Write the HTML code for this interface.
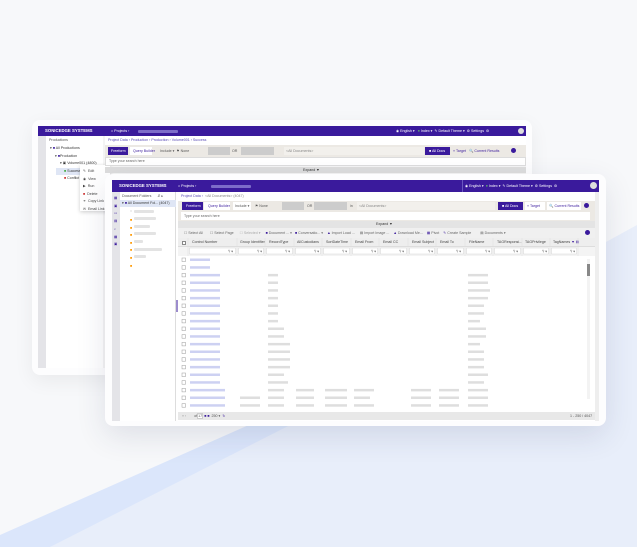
<!DOCTYPE html>
<html><head><meta charset="utf-8"><style>
*{margin:0;padding:0;box-sizing:border-box}
body{width:637px;height:547px;overflow:hidden;background:#f7f8fa;font-family:"Liberation Sans",sans-serif;position:relative}
.a{position:absolute}
.t{position:absolute;font-size:3.6px;white-space:nowrap;color:#555;line-height:1}
.bar{position:absolute;height:3px;border-radius:1px}
.hd{background:#3a1a9c}
.w{color:#fff}
.cb{position:absolute;width:4px;height:4px;border:0.6px solid #888;background:#fff}
</style></head><body>
<svg class="a" style="left:0;top:0" width="637" height="547">
<polygon points="50,547 637,225 637,547" fill="#e8eefa"/>
<polygon points="0,535 260,420 300,420 50,547 0,547" fill="#dbe6fb"/>
</svg>

<!-- back card -->
<div class="a" style="left:32px;top:120px;width:500px;height:255px;background:#fdfdfe;border-radius:8px;box-shadow:0 6px 20px rgba(0,0,0,.06)"></div>
<div class="a" style="left:38px;top:126px;width:488px;height:242px;background:#f4f4f4"></div>
<div class="a hd" style="left:38px;top:126px;width:488px;height:10px"></div>
<div class="t w" style="left:45px;top:129px;font-size:4.3px;font-weight:bold">SONICEDGE SYSTEMS</div>
<div class="t w" style="left:111px;top:129.5px">⌂ Projects ›</div>
<div class="bar" style="left:138px;top:130px;width:40px;background:#7d6cc9"></div>
<div class="t w" style="left:396px;top:129.5px">◉ English ▾ &nbsp;&nbsp;<span style="color:#6c6">●</span> Index ▾ &nbsp;✎ Default Theme ▾ &nbsp;⚙ Settings &nbsp;⚙</div>
<div class="a" style="left:518px;top:128px;width:6px;height:6px;border-radius:50%;background:#ddd"></div>
<div class="a" style="left:38px;top:136px;width:8px;height:232px;background:#e4e4e8"></div>
<div class="a" style="left:46px;top:136px;width:57px;height:232px;background:#fff"></div>
<div class="t" style="left:49px;top:139px">Productions</div>
<div class="t" style="left:50px;top:147px;color:#333">▾ <span style="color:#3a1a9c">■</span> All Productions</div>
<div class="t" style="left:55px;top:155px;color:#333">▾ <span style="color:#3a1a9c">■</span>Production</div>
<div class="t" style="left:60px;top:162px;color:#333">▾ ▣ Volume001 (4800)</div>
<div class="a" style="left:56px;top:168px;width:47px;height:7px;background:#dfe6f5"></div>
<div class="t" style="left:64px;top:170px;color:#333"><span style="color:#4a4">■</span> Success (4</div>
<div class="t" style="left:64px;top:177px;color:#333"><span style="color:#c33">■</span> Conflict (0)</div>
<div class="a" style="left:80px;top:165px;width:30px;height:46px;background:#fff;box-shadow:0 1px 4px rgba(0,0,0,.2)"></div>
<div class="t" style="left:83px;top:168px;line-height:7.6px;color:#444;white-space:pre">✎  Edit
◉  View
▶  Run
<span style="color:#c33">■</span>  Delete
⚭  Copy Link
✉  Email Link</div>
<div class="a" style="left:105px;top:136px;width:421px;height:9px;background:#fff"></div>
<div class="t" style="left:108px;top:139px;color:#5a4bb5">Project Data › Production › Production › Volume001 › Success</div>
<div class="a" style="left:105px;top:145px;width:421px;height:12px;background:#ece9e4"></div>
<div class="a hd" style="left:108px;top:147px;width:20px;height:8px"></div>
<div class="t w" style="left:111px;top:149.5px">Freeform</div>
<div class="a" style="left:130px;top:147px;width:22px;height:8px;background:#fff"></div>
<div class="t" style="left:133px;top:149.5px;color:#3a1a9c">Query Builder</div>
<div class="t" style="left:160px;top:149.5px">Include ▾ &nbsp;⚑ None</div>
<div class="a" style="left:208px;top:147px;width:22px;height:8px;background:#ccc"></div>
<div class="a" style="left:241px;top:147px;width:33px;height:8px;background:#ccc"></div>
<div class="t" style="left:232px;top:149.5px">OR</div>
<div class="a" style="left:284px;top:147px;width:140px;height:8px;background:#f2f0ec"></div>
<div class="t" style="left:286px;top:149.5px;color:#888">&lt;All Documents&gt;</div>
<div class="a hd" style="left:425px;top:147px;width:25px;height:8px"></div>
<div class="t w" style="left:429px;top:149.5px">■ All Docs</div>
<div class="t" style="left:453px;top:149.5px;color:#3a1a9c">⌖ Target &nbsp;&nbsp;🔍 Current Results</div>
<div class="a" style="left:511px;top:148px;width:5px;height:5px;border-radius:50%;background:#3a1a9c"></div>
<div class="a" style="left:105px;top:157px;width:421px;height:9px;background:#fff;border:0.5px solid #ddd"></div>
<div class="t" style="left:109px;top:160px;color:#666">Type your search here</div>
<div class="a" style="left:105px;top:167px;width:421px;height:6px;background:#ddd"></div>
<div class="t" style="left:303px;top:168.5px;color:#333">Expand ▼</div>

<!-- front card -->
<div class="a" style="left:105px;top:174px;width:501px;height:252px;background:#fdfdfe;border-radius:8px;box-shadow:0 10px 30px rgba(40,50,90,.12)"></div>
<div class="a" style="left:112px;top:180px;width:487px;height:241px;background:#fff"></div>
<div class="a hd" style="left:112px;top:180px;width:487px;height:12px"></div>
<div class="t w" style="left:119px;top:184px;font-size:4.3px;font-weight:bold">SONICEDGE SYSTEMS</div>
<div class="t w" style="left:178px;top:184.5px">⌂ Projects ›</div>
<div class="bar" style="left:211px;top:185px;width:40px;background:#7d6cc9"></div>
<div class="a" style="left:462px;top:180px;width:1px;height:12px;background:#6a56c0"></div>
<div class="t w" style="left:465px;top:184.5px">◉ English ▾ &nbsp;<span style="color:#6c6">●</span> Index ▾ &nbsp;✎ Default Theme ▾ &nbsp;⚙ Settings &nbsp;⚙</div>
<div class="a" style="left:590px;top:182px;width:7px;height:7px;border-radius:50%;background:#ddd"></div>
<div class="a" style="left:112px;top:192px;width:8px;height:229px;background:#e4e4e8"></div>
<div class="t" style="left:114px;top:195px;line-height:7.7px;color:#3a1a9c;white-space:pre">▦
▣
▭
▤
⌕
▦
▣</div>
<div class="a" style="left:120px;top:192px;width:56px;height:229px;background:#fff;border-right:1px solid #ddd"></div>
<div class="t" style="left:122px;top:195px">Document Folders &nbsp;&nbsp;&nbsp;&nbsp;&nbsp;⇵ ▸</div>
<div class="a" style="left:120px;top:200px;width:56px;height:7px;background:#dfe6f5"></div>
<div class="t" style="left:122px;top:202px;color:#333">▾ <span style="color:#3a1a9c">■</span> All Document Fol... (4047)</div>
<div class="t" style="left:130px;top:209.5px;color:#aaa">○</div>
<div class="bar" style="left:134px;top:210px;width:20px;background:#e3e3e3"></div>
<div class="t" style="left:130px;top:217px;color:#f90;line-height:7.6px;white-space:pre">■
■
■
■
■
■
■</div>
<div class="bar" style="left:134px;top:217px;width:22px;background:#e3e3e3"></div>
<div class="bar" style="left:134px;top:225px;width:16px;background:#e3e3e3"></div>
<div class="bar" style="left:134px;top:232px;width:22px;background:#e3e3e3"></div>
<div class="bar" style="left:134px;top:240px;width:9px;background:#e3e3e3"></div>
<div class="bar" style="left:134px;top:248px;width:28px;background:#e3e3e3"></div>
<div class="bar" style="left:134px;top:255px;width:12px;background:#e3e3e3"></div>
<div class="a" style="left:176px;top:300px;width:2px;height:12px;background:#3a1a9c;opacity:.5"></div>

<div class="t" style="left:181px;top:195px;color:#5a4bb5">Project Data › &nbsp;<span style="color:#888">&lt;All Documents&gt; (4047)</span></div>
<div class="a" style="left:178px;top:201px;width:417px;height:10px;background:#ece9e4"></div>
<div class="a hd" style="left:182px;top:202px;width:21px;height:8px"></div>
<div class="t w" style="left:186px;top:204.5px">Freeform</div>
<div class="a" style="left:204px;top:202px;width:26px;height:8px;background:#fff"></div>
<div class="t" style="left:208px;top:204.5px;color:#3a1a9c">Query Builder</div>
<div class="a" style="left:233px;top:202px;width:18px;height:8px;background:#fff"></div>
<div class="t" style="left:235px;top:204.5px">Include ▾</div>
<div class="t" style="left:255px;top:204.5px">⚑ None</div>
<div class="a" style="left:282px;top:202px;width:22px;height:8px;background:#ccc"></div>
<div class="t" style="left:307px;top:204.5px">OR</div>
<div class="a" style="left:314px;top:202px;width:33px;height:8px;background:#ccc"></div>
<div class="t" style="left:350px;top:204.5px">in</div>
<div class="a" style="left:357px;top:202px;width:138px;height:8px;background:#f2f0ec"></div>
<div class="t" style="left:359px;top:204.5px;color:#888">&lt;All Documents&gt;</div>
<div class="a hd" style="left:498px;top:202px;width:25px;height:8px"></div>
<div class="t w" style="left:502px;top:204.5px">■ All Docs</div>
<div class="a" style="left:525px;top:202px;width:20px;height:8px;background:#fff"></div>
<div class="t" style="left:527px;top:204.5px;color:#3a1a9c">⌖ Target</div>
<div class="a" style="left:547px;top:202px;width:34px;height:8px;background:#fff"></div>
<div class="t" style="left:549px;top:204.5px;color:#3a1a9c">🔍 Current Results</div>
<div class="a" style="left:584px;top:203px;width:5px;height:5px;border-radius:50%;background:#3a1a9c"></div>
<div class="a" style="left:178px;top:211px;width:417px;height:10px;background:#ece9e4"></div>
<div class="a" style="left:181px;top:212px;width:409px;height:8px;background:#fff"></div>
<div class="t" style="left:184px;top:214.5px;color:#666">Type your search here</div>
<div class="a" style="left:178px;top:221px;width:417px;height:7px;background:#e4e4e4"></div>
<div class="t" style="left:376px;top:223px;color:#333">Expand ▼</div>
<div class="a" style="left:178px;top:228px;width:417px;height:10px;background:#f0f0f0"></div>
<div class="t" style="left:184px;top:231.5px;color:#666;word-spacing:0">☐ Select All &nbsp;&nbsp;&nbsp;&nbsp;&nbsp;&nbsp;☐ Select Page &nbsp;&nbsp;&nbsp;&nbsp;&nbsp;<span style="color:#aaa">☐ Selected ▾</span> &nbsp;&nbsp;&nbsp;&nbsp;<span style="color:#3a1a9c">■</span> Document ... ▾ &nbsp;&nbsp;<span style="color:#3a1a9c">■</span> Conversatio... ▾ &nbsp;&nbsp;&nbsp;<span style="color:#3a1a9c">▲</span> Import Load ... &nbsp;&nbsp;&nbsp;&nbsp;▤ Import Image ... &nbsp;&nbsp;&nbsp;<span style="color:#3a1a9c">▲</span> Download Me... &nbsp;&nbsp;&nbsp;<span style="color:#3a1a9c">▦</span> Pivot &nbsp;&nbsp;&nbsp;<span style="color:#3a1a9c">✎</span> Create Sample &nbsp;&nbsp;&nbsp;&nbsp;&nbsp;&nbsp;&nbsp;&nbsp;▤ Documents ▾</div>
<div class="a" style="left:585px;top:230px;width:5px;height:5px;border-radius:50%;background:#3a1a9c"></div>
<div class="a" style="left:178px;top:238px;width:417px;height:9px;background:#eee;border-bottom:0.5px solid #ddd"></div>
<div class="a" style="left:178px;top:247px;width:417px;height:9px;background:#f4f4f4"></div>
<div class="cb" style="left:182px;top:240.5px"></div>
<div class="t" style="left:192px;top:241px;color:#444;word-spacing:0">Control Number</div>
<div class="t" style="left:240px;top:241px;color:#444">Group Identifier</div>
<div class="t" style="left:269px;top:241px;color:#444">RecordType</div>
<div class="t" style="left:297px;top:241px;color:#444">AllCustodians</div>
<div class="t" style="left:326px;top:241px;color:#444">SortDateTime</div>
<div class="t" style="left:355px;top:241px;color:#444">Email From</div>
<div class="t" style="left:383px;top:241px;color:#444">Email CC</div>
<div class="t" style="left:412px;top:241px;color:#444">Email Subject</div>
<div class="t" style="left:440px;top:241px;color:#444">Email To</div>
<div class="t" style="left:469px;top:241px;color:#444">FileName</div>
<div class="t" style="left:497px;top:241px;color:#444">TAGResponsi...</div>
<div class="t" style="left:525px;top:241px;color:#444">TAGPrivilege</div>
<div class="t" style="left:553px;top:241px;color:#444">TagNames <span style="color:#3a1a9c">▼ ▤</span></div>
<svg class="a" style="left:178px;top:238px" width="417" height="18">
<g stroke="#ddd" stroke-width=".5">
<line x1="10" y1="0" x2="10" y2="18"/><line x1="59" y1="0" x2="59" y2="18"/><line x1="87" y1="0" x2="87" y2="18"/><line x1="116" y1="0" x2="116" y2="18"/><line x1="144" y1="0" x2="144" y2="18"/><line x1="173" y1="0" x2="173" y2="18"/><line x1="201" y1="0" x2="201" y2="18"/><line x1="230" y1="0" x2="230" y2="18"/><line x1="258" y1="0" x2="258" y2="18"/><line x1="287" y1="0" x2="287" y2="18"/><line x1="315" y1="0" x2="315" y2="18"/><line x1="344" y1="0" x2="344" y2="18"/><line x1="372" y1="0" x2="372" y2="18"/><line x1="400" y1="0" x2="400" y2="18"/>
</g>
<g fill="#fff" stroke="#ccc" stroke-width=".4">
<rect x="11.5" y="10" width="46" height="6"/><rect x="60.5" y="10" width="25" height="6"/><rect x="88.5" y="10" width="26" height="6"/><rect x="117.5" y="10" width="25" height="6"/><rect x="145.5" y="10" width="26" height="6"/><rect x="174.5" y="10" width="25" height="6"/><rect x="202.5" y="10" width="26" height="6"/><rect x="231.5" y="10" width="25" height="6"/><rect x="259.5" y="10" width="26" height="6"/><rect x="288.5" y="10" width="25" height="6"/><rect x="316.5" y="10" width="26" height="6"/><rect x="345.5" y="10" width="25" height="6"/><rect x="373.5" y="10" width="25" height="6"/>
</g>
<g font-size="3.5" fill="#555" font-family="Liberation Sans">
<text x="50" y="14.5">Ÿ ▾</text><text x="79" y="14.5">Ÿ ▾</text><text x="107" y="14.5">Ÿ ▾</text><text x="136" y="14.5">Ÿ ▾</text><text x="164" y="14.5">Ÿ ▾</text><text x="193" y="14.5">Ÿ ▾</text><text x="221" y="14.5">Ÿ ▾</text><text x="250" y="14.5">Ÿ ▾</text><text x="278" y="14.5">Ÿ ▾</text><text x="307" y="14.5">Ÿ ▾</text><text x="335" y="14.5">Ÿ ▾</text><text x="364" y="14.5">Ÿ ▾</text><text x="392" y="14.5">Ÿ ▾</text>
</g>
</svg>

<!-- rows -->
<svg class="a" style="left:178px;top:256px" width="417" height="156">
<g fill="none" stroke="#999" stroke-width=".5">
<rect x="4" y="2" width="3.5" height="3.5"/><rect x="4" y="9.7" width="3.5" height="3.5"/><rect x="4" y="17.4" width="3.5" height="3.5"/><rect x="4" y="25" width="3.5" height="3.5"/><rect x="4" y="32.7" width="3.5" height="3.5"/><rect x="4" y="40.4" width="3.5" height="3.5"/><rect x="4" y="48" width="3.5" height="3.5"/><rect x="4" y="55.7" width="3.5" height="3.5"/><rect x="4" y="63.4" width="3.5" height="3.5"/><rect x="4" y="71" width="3.5" height="3.5"/><rect x="4" y="78.7" width="3.5" height="3.5"/><rect x="4" y="86.4" width="3.5" height="3.5"/><rect x="4" y="94" width="3.5" height="3.5"/><rect x="4" y="101.7" width="3.5" height="3.5"/><rect x="4" y="109.4" width="3.5" height="3.5"/><rect x="4" y="117" width="3.5" height="3.5"/><rect x="4" y="124.7" width="3.5" height="3.5"/><rect x="4" y="132.4" width="3.5" height="3.5"/><rect x="4" y="140" width="3.5" height="3.5"/><rect x="4" y="147.7" width="3.5" height="3.5"/>
</g>
<g fill="#cdd1f2">
<rect x="12" y="2.5" width="20" height="2.5"/><rect x="12" y="10.2" width="20" height="2.5"/>
<rect x="12" y="17.9" width="30" height="2.5"/><rect x="12" y="25.5" width="30" height="2.5"/><rect x="12" y="33.2" width="30" height="2.5"/><rect x="12" y="40.9" width="30" height="2.5"/><rect x="12" y="48.5" width="30" height="2.5"/><rect x="12" y="56.2" width="30" height="2.5"/><rect x="12" y="63.9" width="30" height="2.5"/><rect x="12" y="71.5" width="30" height="2.5"/><rect x="12" y="79.2" width="30" height="2.5"/><rect x="12" y="86.9" width="30" height="2.5"/><rect x="12" y="94.5" width="30" height="2.5"/><rect x="12" y="102.2" width="30" height="2.5"/><rect x="12" y="109.9" width="30" height="2.5"/><rect x="12" y="117.5" width="30" height="2.5"/><rect x="12" y="125.2" width="30" height="2.5"/><rect x="12" y="132.9" width="35" height="2.5"/><rect x="12" y="140.5" width="35" height="2.5"/><rect x="12" y="148.2" width="35" height="2.5"/>
</g>
<g fill="#dedede">
<rect x="90" y="17.9" width="10" height="2.5"/><rect x="90" y="25.5" width="10" height="2.5"/><rect x="90" y="33.2" width="10" height="2.5"/><rect x="90" y="40.9" width="10" height="2.5"/><rect x="90" y="48.5" width="10" height="2.5"/><rect x="90" y="56.2" width="10" height="2.5"/><rect x="90" y="63.9" width="10" height="2.5"/>
<rect x="90" y="71.5" width="16" height="2.5"/><rect x="90" y="79.2" width="16" height="2.5"/><rect x="90" y="86.9" width="22" height="2.5"/><rect x="90" y="94.5" width="22" height="2.5"/><rect x="90" y="102.2" width="22" height="2.5"/><rect x="90" y="109.9" width="22" height="2.5"/><rect x="90" y="117.5" width="16" height="2.5"/><rect x="90" y="125.2" width="20" height="2.5"/><rect x="90" y="132.9" width="16" height="2.5"/><rect x="90" y="140.5" width="16" height="2.5"/><rect x="90" y="148.2" width="16" height="2.5"/>
<rect x="290" y="17.9" width="20" height="2.5"/><rect x="290" y="25.5" width="20" height="2.5"/><rect x="290" y="33.2" width="22" height="2.5"/><rect x="290" y="40.9" width="20" height="2.5"/><rect x="290" y="48.5" width="16" height="2.5"/><rect x="290" y="56.2" width="16" height="2.5"/><rect x="290" y="63.9" width="12" height="2.5"/><rect x="290" y="71.5" width="18" height="2.5"/><rect x="290" y="79.2" width="18" height="2.5"/><rect x="290" y="86.9" width="12" height="2.5"/><rect x="290" y="94.5" width="16" height="2.5"/><rect x="290" y="102.2" width="16" height="2.5"/><rect x="290" y="109.9" width="16" height="2.5"/><rect x="290" y="117.5" width="20" height="2.5"/><rect x="290" y="125.2" width="16" height="2.5"/><rect x="290" y="132.9" width="20" height="2.5"/><rect x="290" y="140.5" width="20" height="2.5"/><rect x="290" y="148.2" width="20" height="2.5"/>
<rect x="118" y="132.9" width="18" height="2.5"/><rect x="118" y="140.5" width="18" height="2.5"/><rect x="118" y="148.2" width="18" height="2.5"/>
<rect x="147" y="132.9" width="22" height="2.5"/><rect x="147" y="140.5" width="22" height="2.5"/><rect x="147" y="148.2" width="22" height="2.5"/>
<rect x="176" y="132.9" width="20" height="2.5"/><rect x="176" y="140.5" width="16" height="2.5"/><rect x="176" y="148.2" width="20" height="2.5"/>
<rect x="233" y="132.9" width="20" height="2.5"/><rect x="233" y="140.5" width="20" height="2.5"/><rect x="233" y="148.2" width="20" height="2.5"/>
<rect x="261" y="132.9" width="20" height="2.5"/><rect x="261" y="140.5" width="20" height="2.5"/><rect x="261" y="148.2" width="20" height="2.5"/>
<rect x="62" y="140.5" width="20" height="2.5"/><rect x="62" y="148.2" width="20" height="2.5"/>
</g>
<rect x="409" y="3" width="3" height="140" fill="#f3f3f3"/>
<rect x="409" y="8" width="3" height="12" fill="#888"/>
</svg>

<div class="a" style="left:178px;top:412px;width:417px;height:8px;background:#e8e8e8"></div>
<div class="a" style="left:197px;top:413px;width:6px;height:6px;background:#fff;border:0.5px solid #ccc"></div>
<div class="t" style="left:182px;top:414.5px;color:#999">«  ‹ &nbsp;&nbsp;&nbsp;&nbsp;&nbsp;&nbsp;&nbsp;<span style="color:#555">of 17</span> &nbsp;<span style="color:#3a1a9c">■ ■</span> &nbsp;<span style="color:#555">250 ▾</span> &nbsp;<span style="color:#3a1a9c">↻</span></div>
<div class="t" style="left:570px;top:414.5px;color:#555">1 - 250 / 4047</div>
<div class="a" style="left:595px;top:192px;width:4px;height:229px;background:#eee"></div>
</body></html>
